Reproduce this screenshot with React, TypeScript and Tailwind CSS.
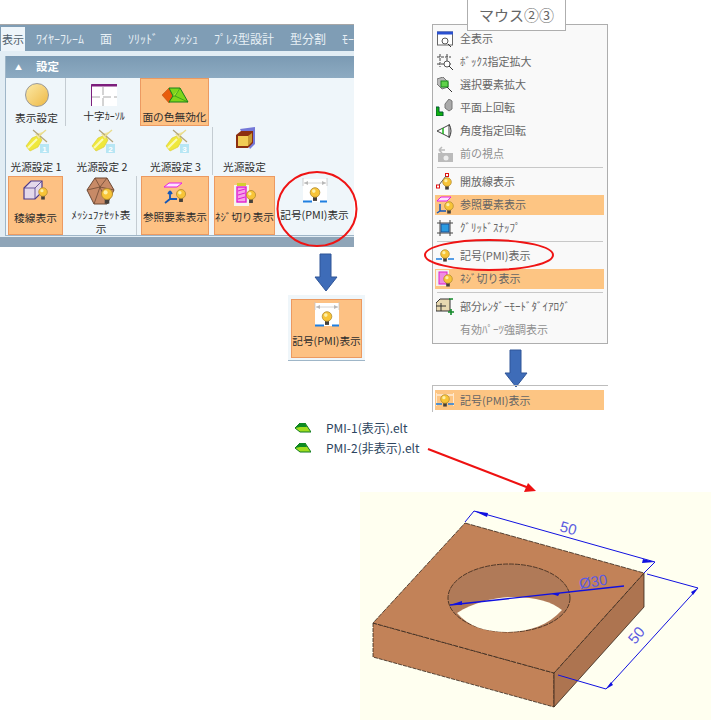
import type { ReactNode } from "react";

const jp = "font-['Noto_Sans_CJK_JP','Liberation_Sans',sans-serif]";

function Bulb({ x, y, s = 1 }: { x: number; y: number; s?: number }) {
  return (
    <g transform={`translate(${x} ${y}) scale(${s})`}>
      <rect x="-2" y="3.4" width="4" height="5" fill="#45403a" />
      <circle cx="0" cy="0" r="4.8" fill="#f8c437" stroke="#b08a30" strokeWidth="0.8" />
      <circle cx="-1.2" cy="-1.4" r="1.8" fill="#fdf0a8" />
    </g>
  );
}

function SourceIcon({ n }: { n: string }) {
  return (
    <svg className="ml-[2px] shrink-0" width="24" height="26" viewBox="0 0 24 26" aria-hidden>
      <path d="M1 19 L7 11 L14 8 L17 13 L13 20 L5 24 Z" fill="#efe83c" stroke="#d8c82c" strokeWidth="0.6" />
      <path d="M3 21 L12 12" stroke="#fbfab4" strokeWidth="2.2" />
      <path d="M10 7 L18 5 L14 12 Z" fill="#f0e6a0" />
      <path d="M8 3 L22 15" stroke="#b3a47a" strokeWidth="1.2" />
      <path d="M21 3 L14 9" stroke="#e8dc8c" strokeWidth="1.4" />
      <rect x="15" y="17" width="9" height="9" fill="#b7e6f4" />
      <text x="19.5" y="24.6" textAnchor="middle" fontSize="8" fontWeight="bold" fill="#fff" fontFamily="Liberation Sans">
        {n}
      </text>
    </svg>
  );
}

function PmiIcon() {
  return (
    <svg width="26" height="27" viewBox="0 0 26 27" aria-hidden>
      <rect x="1" y="2" width="24" height="23" fill="#ffffff" />
      <path d="M1 1 V9 M25 1 V9" stroke="#c4c4c4" strokeWidth="0.8" />
      <path d="M2 6 H24" stroke="#c9c9c9" strokeWidth="0.8" />
      <path d="M2 6 L6 4 V8 Z M24 6 L20 4 V8 Z" fill="#b8b8b8" />
      <path d="M1 24.5 H25" stroke="#1f7fe0" strokeWidth="2" strokeDasharray="9 8" />
      <Bulb x={13} y={15.5} />
    </svg>
  );
}

function RibbonButton({ label, className, children }: { label: ReactNode; className: string; children: ReactNode }) {
  return (
    <div className={`flex shrink-0 flex-col items-center text-center leading-[17px] ${className}`}>
      {children}
      <span className="block">{label}</span>
    </div>
  );
}

const orange = "border border-[#ec9a61] bg-[#fdc183]";

function Ribbon() {
  return (
    <div className={`flex h-[223px] w-[354px] flex-col bg-[#e2edf4] text-[10.7px] text-[#2d2d2d] ${jp}`}>
      <div className="h-px bg-[#a7a7a7]" />
      <div className="flex h-[26px] shrink-0 items-end bg-[#7f9db5] text-[#e8f0f5]">
        <div className="ml-px flex h-6 w-8 items-center justify-center bg-[#eef5fa] text-[11px] text-[#50606c]">表示</div>
        <div className="ml-[11px] flex h-6 items-center gap-[16px] whitespace-nowrap text-[12px]">
          <span>ﾜｲﾔｰﾌﾚｰﾑ</span>
          <span>面</span>
          <span>ｿﾘｯﾄﾞ</span>
          <span>ﾒｯｼｭ</span>
          <span>ﾌﾟﾚｽ型設計</span>
          <span>型分割</span>
          <span>ﾓｰ</span>
        </div>
      </div>
      <div className="flex flex-1 flex-col pl-[5px] pt-[5px]">
        <div className="flex flex-1 flex-col border-b border-l border-[#9fb6c8] bg-[#eff6fa]">
          <div className="flex h-[22px] shrink-0 items-center bg-gradient-to-b from-[#7b9ab3] to-[#8dabc2] pl-[9px] text-[11.5px] font-bold text-white">
            <span className="mr-[14px] text-[7px]">▲</span>設定
          </div>
          <div className="flex h-[48px] items-stretch">
            <RibbonButton label="表示設定" className="ml-[2px] w-[58px] border-r border-[#c4ccd2] pt-[5px]">
              <div className="mb-[2px] h-6 w-6 rounded-full border border-[#9a9a9a] bg-gradient-to-br from-[#fbe9a4] to-[#eeb93f]" />
            </RibbonButton>
            <RibbonButton label={<>十字<span className="text-[10px]">ｶｰｿﾙ</span></>} className="ml-[2px] w-[72px] pt-[6px]">
              <svg width="26" height="23" viewBox="0 0 26 23" aria-hidden>
                <rect x="0" y="0" width="26" height="22" fill="#fff" />
                <path d="M0.5 22 V0.5 H26" stroke="#7d1f7d" strokeWidth="1" fill="none" />
                <path d="M0 1.5 H26" stroke="#7d1f7d" strokeWidth="2" />
                <path d="M12 3 V22 M1 13 H26" stroke="#a8a8a8" strokeWidth="1" strokeDasharray="8 3" />
              </svg>
            </RibbonButton>
            <RibbonButton label="面の色無効化" className={`w-[69px] pt-[8px] ${orange}`}>
              <svg className="mb-[3px]" width="28" height="18" viewBox="0 0 28 18" aria-hidden>
                <path d="M1 8 L8 1 L12 9 L8 16 Z" fill="#e85c0c" stroke="#b34a10" strokeWidth="0.5" />
                <path d="M8 1 H19 L27 15 H8 L12 9 Z" fill="#7fd51a" stroke="#16801a" strokeWidth="1" />
                <path d="M19 1 L14 9 H12 M14 9 L27 15" stroke="#16801a" strokeWidth="0.6" fill="#b4ea3e" />
              </svg>
            </RibbonButton>
          </div>
          <div className="flex h-[49px] items-stretch pt-px">
            <RibbonButton label="光源設定 1" className="w-[60px]">
              <SourceIcon n="1" />
              <div className="h-[5px]" />
            </RibbonButton>
            <RibbonButton label="光源設定 2" className="ml-[6px] w-[60px]">
              <SourceIcon n="2" />
              <div className="h-[5px]" />
            </RibbonButton>
            <RibbonButton label="光源設定 3" className="ml-[10px] w-[67px]">
              <SourceIcon n="3" />
              <div className="h-[5px]" />
            </RibbonButton>
            <RibbonButton label="光源設定" className="ml-[3px] w-[64px] border-l border-[#c4ccd2]">
              <svg width="24" height="25" className="mb-[6px] shrink-0" viewBox="0 0 24 25" aria-hidden>
                <path d="M7 2 L22 0 V17 L17 22 Z" fill="#7478d8" />
                <path d="M3 8 L8 4 H20 V16 L15 21 H3 Z" fill="#8c2f10" />
                <rect x="5" y="9" width="10" height="10" fill="#f1cc55" />
                <path d="M15 9 L19 6 V15 L15 19 Z" fill="#c89a32" />
              </svg>
            </RibbonButton>
          </div>
          <div className="flex h-[60px] items-stretch pt-px">
            <RibbonButton label="稜線表示" className={`ml-[2px] w-[55px] pt-[3px] ${orange}`}>
              <svg className="mb-[4px] shrink-0" width="26" height="25" viewBox="0 0 26 25" aria-hidden>
                <path d="M1 8 L8 1 H19 V12 L12 19 H1 Z" fill="#e4d8ea" stroke="#4d3a8a" strokeWidth="1.2" />
                <path d="M1 8 H12 V19 M12 8 L19 1" fill="none" stroke="#4d3a8a" strokeWidth="0.8" />
                <Bulb x={20} y={12} s={0.9} />
              </svg>
            </RibbonButton>
            <RibbonButton
              label={<span className="block leading-[14px]">ﾒｯｼｭﾌｧｾｯﾄ表<br />示</span>}
              className="ml-[3px] w-[71px] border-r border-[#c4ccd2] pt-[1px]"
            >
              <svg className="mb-[2px] shrink-0" width="30" height="29" viewBox="0 0 30 29" aria-hidden>
                <path d="M9 1 H21 L28 13 L21 27 H8 L1 13 Z" fill="#c78a67" stroke="#6e4a35" strokeWidth="1" />
                <path d="M9 1 L14 10 L1 13 M14 10 L21 1 M14 10 L28 13 M14 10 L8 27 M14 10 L21 27" stroke="#6e4a35" strokeWidth="0.8" fill="none" />
                <Bulb x={21} y={17} s={1.15} />
              </svg>
            </RibbonButton>
            <RibbonButton label="参照要素表示" className={`ml-[4px] w-[68px] pt-[5px] ${orange}`}>
              <svg className="mb-[4px] shrink-0" width="24" height="22" viewBox="0 0 24 22" aria-hidden>
                <path d="M1 5 L6 1 H19 L14 5 Z" fill="#fde4ff" stroke="#e61ee6" strokeWidth="1" />
                <path d="M7 9 V17 H14 M7 17 L2 21 M7 9 L5 12 M7 9 L9 12" stroke="#1558b8" strokeWidth="1.8" fill="none" />
                <Bulb x={18} y={12} s={0.95} />
              </svg>
            </RibbonButton>
            <RibbonButton label="ﾈｼﾞ切り表示" className={`ml-[5px] w-[61px] whitespace-nowrap pt-[5px] ${orange}`}>
              <svg className="mb-[1px] shrink-0" width="24" height="25" viewBox="0 0 24 25" aria-hidden>
                <rect x="1" y="3" width="15" height="21" fill="#f6f5ee" />
                <rect x="4" y="1" width="9" height="3" fill="#d4d030" />
                <rect x="4" y="5" width="9" height="15" fill="#f6a0e8" stroke="#e01ecf" strokeWidth="1.4" />
                <path d="M5 9 L12 7 M5 13 L12 11 M5 17 L12 15" stroke="#e01ecf" />
                <Bulb x={18} y={13} s={0.95} />
              </svg>
            </RibbonButton>
            <RibbonButton label="記号(PMI)表示" className="ml-[2px] w-[75px] whitespace-nowrap pt-[1px]">
              <div className="mb-[2px] h-[27px]"><PmiIcon /></div>
            </RibbonButton>
          </div>
        </div>
        <div className="-ml-[5px] mt-px h-[10px] bg-[#8fa5b8]" />
      </div>
    </div>
  );
}

function DownArrow() {
  return (
    <svg width="24" height="40" viewBox="0 0 24 40" aria-hidden>
      <path d="M6 1 H17 V24 H23 L12 38 L1 24 H6 Z" fill="#3e6cb8" stroke="#2f5597" strokeWidth="1" />
    </svg>
  );
}

type Item = { label: string; icon: ReactNode; on?: boolean; off?: boolean };

const items: (Item | "sep")[] = [
  { label: "全表示", icon: <svg width="16" height="16" viewBox="0 0 16 16"><rect x="0.5" y="1" width="15" height="13" fill="#fff" stroke="#666" /><rect x="0" y="0.5" width="16" height="3" fill="#2a50d0" /><circle cx="8" cy="10" r="3" fill="none" stroke="#555" /><path d="M11 13 L14 16" stroke="#333" /></svg> },
  { label: "ﾎﾞｯｸｽ指定拡大", icon: <svg width="16" height="16" viewBox="0 0 16 16"><path d="M0 3 H14 M0 10 H14 M3 0 V13 M10 0 V13" stroke="#444" strokeDasharray="3 1" /><circle cx="10" cy="10" r="3" fill="#fff" stroke="#555" /><path d="M12 12 L16 16" stroke="#333" /></svg> },
  { label: "選択要素拡大", icon: <svg width="16" height="16" viewBox="0 0 16 16"><path d="M0 2 L6 0 L11 5 V10 L5 12 L0 7 Z" fill="#bbb" stroke="#777" /><rect x="4" y="4" width="7" height="6" fill="#5fd24a" stroke="#198a1c" /><path d="M10 10 L15 15" stroke="#333" /></svg> },
  { label: "平面上回転", icon: <svg width="17" height="17" viewBox="0 0 17 17"><path d="M0 8 H3 V13 H7 V17 H0 Z" fill="#10b010" stroke="#053" /><path d="M9 5 L13 0 L16 2 V10 L13 12 L9 9 Z" fill="#aaa" stroke="#777" /></svg> },
  { label: "角度指定回転", icon: <svg width="16" height="16" viewBox="0 0 16 16"><path d="M0 8 L12 2 V14 Z" fill="#fff" stroke="#444" /><path d="M6 5 V11" stroke="#1ab01a" strokeWidth="1.5" /><path d="M12 1 Q16 8 12 15" fill="none" stroke="#333" /></svg> },
  { label: "前の視点", off: true, icon: <svg width="16" height="16" viewBox="0 0 16 16"><rect x="1" y="7" width="15" height="9" fill="#bbb" /><circle cx="9" cy="12" r="2.5" fill="#eee" /><path d="M2 4 H8 M2 4 L5 1 M2 4 L5 7" stroke="#bbb" strokeWidth="1.5" fill="none" /></svg> },
  "sep",
  { label: "開放線表示", icon: <svg width="17" height="17" viewBox="0 0 17 17"><rect x="0.5" y="12" width="3" height="3" fill="#fff" stroke="#e01010" /><rect x="9.5" y="0.5" width="3" height="3" fill="#fff" stroke="#e01010" /><path d="M3 12 L10 3" stroke="#555" /><Bulb x={11} y={9} s={0.9} /></svg> },
  { label: "参照要素表示", on: true, icon: <svg width="18" height="18" viewBox="0 0 18 18"><path d="M1 5 L5 1 H15 L11 5 Z" fill="#fde4ff" stroke="#e61ee6" /><path d="M4 8 V15 H10 M4 15 L1 17" stroke="#1558b8" strokeWidth="1.5" fill="none" /><Bulb x={13} y={10} s={0.9} /></svg> },
  { label: "ｸﾞﾘｯﾄﾞｽﾅｯﾌﾟ", icon: <svg width="16" height="16" viewBox="0 0 16 16"><path d="M3 0 V16 M13 0 V16 M0 3 H16 M0 13 H16" stroke="#444" /><rect x="4" y="4" width="8" height="8" fill="#2a9ae0" stroke="#1a4f90" /></svg> },
  "sep",
  { label: "記号(PMI)表示", icon: <svg width="18" height="16" viewBox="0 0 18 16"><path d="M0 11 H18" stroke="#1f7fe0" strokeWidth="1.5" strokeDasharray="6 6" /><Bulb x={9} y={6} s={0.9} /></svg> },
  { label: "ﾈｼﾞ切り表示", on: true, icon: <svg width="17" height="17" viewBox="0 0 17 17"><rect x="0" y="0" width="13" height="16" fill="#f4f2e8" /><rect x="3" y="2" width="8" height="12" fill="#f08ce0" stroke="#e01ecf" /><Bulb x={12} y={9} s={0.9} /></svg> },
  "sep",
  { label: "部分ﾚﾝﾀﾞｰﾓｰﾄﾞﾀﾞｲｱﾛｸﾞ", icon: <svg width="18" height="17" viewBox="0 0 18 17"><path d="M0 5 L4 1 H14 V13 H0 Z" fill="#e8d8b0" stroke="#333" /><path d="M0 8 H10 M5 5 V13" stroke="#333" /><path d="M13 1 H17 M12 14 H18 M15 11 V17" stroke="#138a2a" strokeWidth="1.6" /></svg> },
  { label: "有効ﾊﾟｰﾂ強調表示", off: true, icon: null },
];

function MenuRow({ label, icon, on, off }: Item) {
  return (
    <div className={`flex h-[23px] items-center pl-[2px] ${off ? "text-[#909090]" : "text-[#666]"}`}>
      <div className={`flex h-5 w-[169px] items-center ${on ? "bg-[#fdc583]" : ""}`}>
        <div className="flex w-[19px] shrink-0 justify-center">{icon}</div>
        <span className="ml-[6px] whitespace-nowrap">{label}</span>
      </div>
    </div>
  );
}

function ContextMenu() {
  return (
    <div className={`flex h-[320px] w-[176px] flex-col border border-[#aeaeae] bg-[#f9f9f9] pt-[2px] text-[11px] ${jp}`}>
      {items.map((it, i) =>
        it === "sep" ? (
          <div key={i} className="mx-[4px] my-[2px] h-px shrink-0 bg-[#c8c8c8]" />
        ) : (
          <MenuRow key={i} {...it} />
        ),
      )}
    </div>
  );
}

function PartIcon() {
  return (
    <svg width="16" height="10" viewBox="0 0 16 10" aria-hidden>
      <path d="M0 5 L5 0 H10 L16 9 H5 Z" fill="#a0dc20" stroke="#0e7a20" strokeWidth="1" />
      <path d="M0 5 L5 0 H10 L12 4 H5 Z" fill="#0e8a24" />
    </svg>
  );
}

function Model() {
  return (
    <svg className="block h-full w-full" viewBox="360 492 351 228" aria-hidden>
      <rect x="360" y="492" width="351" height="228" fill="#fffff0" />
      <path d="M373 623 V657 L554 707 V673 Z" fill="#c28258" stroke="#33251a" strokeWidth="0.8" strokeDasharray="4 1" />
      <path d="M554 673 V707 L644 607 V573 Z" fill="#ad7450" stroke="#33251a" strokeWidth="0.8" />
      <path d="M465 523 L644 573 L554 673 L373 623 Z" fill="#c28258" stroke="#33251a" strokeWidth="0.8" strokeDasharray="5 1" />
      <ellipse cx="509" cy="598" rx="61" ry="34" fill="#b07a58" stroke="#33251a" strokeWidth="0.8" strokeDasharray="5 1" />
      <path d="M457 613 C475 602 495 597 515 597 C535 597 552 602 562 610 C548 625 530 632 507 632 C485 632 468 626 457 613 Z" fill="#fffff0" />
      <g stroke="#1010e0" strokeWidth="1" fill="none">
        <path d="M465 522 L474 511 L655 562 L644 573" />
        <path d="M647 574 L698 588 L606 689 L558 675" />
        <path d="M450 605 L624 586" strokeWidth="1.4" />
      </g>
      <g fill="#1010e0">
        <path d="M474 511 L488 513 L487 517 Z" />
        <path d="M655 562 L643 559 L642 563 Z" />
        <path d="M450 605 L462 601 L462 605 Z" />
        <path d="M560 593 L558 596 L552 594 Z" />
        <path d="M698 588 L691 592 L693 595 Z" />
        <path d="M606 689 L611 682 L613 685 Z" />
      </g>
      <g fill="#5b5be0" fontFamily="Liberation Sans" fontSize="15">
        <text transform="translate(559 531) rotate(15)">50</text>
        <text transform="translate(635 645) rotate(-50)">50</text>
        <text transform="translate(580 589) rotate(-9)">Ø30</text>
      </g>
    </svg>
  );
}

export default function App() {
  return (
    <div className="relative h-[720px] w-[711px] overflow-hidden bg-white">
      <div className="absolute left-0 top-[24px]"><Ribbon /></div>

      <svg className="pointer-events-none absolute left-[272px] top-[168px]" width="90" height="84" viewBox="0 0 90 84" aria-hidden>
        <ellipse cx="45" cy="41" rx="39.5" ry="37" fill="none" stroke="#ef1414" strokeWidth="2" />
      </svg>

      <div className="absolute left-[314px] top-[253px]"><DownArrow /></div>

      <div className={`absolute left-[288px] top-[295px] h-[66px] w-[77px] border-b border-[#9fb6c8] bg-[#eff6fa] px-[3px] pt-[4px] text-[10.7px] text-[#2d2d2d] ${jp}`}>
        <RibbonButton label="記号(PMI)表示" className={`h-[59px] w-[71px] whitespace-nowrap pt-[1px] ${orange}`}>
          <div className="mb-[4px] h-[27px]"><PmiIcon /></div>
        </RibbonButton>
      </div>

      <div className="absolute left-[432px] top-[24px]"><ContextMenu /></div>
      <div className={`absolute left-[467px] top-0 flex h-[31px] w-[99px] items-center justify-center border border-t-0 border-[#aeaeae] bg-white text-[15px] text-[#666] ${jp}`}>
        マウス②③
      </div>

      <svg className="pointer-events-none absolute left-[420px] top-[238px]" width="146" height="34" viewBox="0 0 146 34" aria-hidden>
        <ellipse cx="69" cy="17" rx="64" ry="15" fill="none" stroke="#ef1414" strokeWidth="2" />
      </svg>

      <div className="absolute left-[504px] top-[349px]"><DownArrow /></div>

      <div className={`absolute left-[432px] top-[385px] h-[27px] w-[176px] border-l border-t border-[#bdbdbd] pl-[2px] pt-[4px] text-[11px] text-[#666] ${jp}`}>
        <div className="flex h-5 w-[169px] items-center bg-[#fdc583]">
          <div className="flex w-[19px] justify-center">
            <svg width="18" height="16" viewBox="0 0 18 16" aria-hidden>
              <path d="M0 1 V14 M18 1 V14 M1 3 H17" stroke="#fff" strokeWidth="1.2" />
              <path d="M0 12 H18" stroke="#1f7fe0" strokeWidth="1.5" strokeDasharray="6 6" />
              <Bulb x={9} y={7} s={0.9} />
            </svg>
          </div>
          <span className="ml-[6px]">記号(PMI)表示</span>
        </div>
      </div>

      <div className={`absolute left-[295px] top-[418px] flex flex-col text-[12px] leading-[20px] text-[#2c4560] ${jp}`}>
        <div className="flex items-center"><PartIcon /><span className="ml-[15px]">PMI-1(表示).elt</span></div>
        <div className="flex items-center"><PartIcon /><span className="ml-[15px]">PMI-2(非表示).elt</span></div>
      </div>

      <div className="absolute left-[360px] top-[492px] h-[228px] w-[351px]"><Model /></div>

      <svg className="pointer-events-none absolute left-[425px] top-[445px]" width="115" height="50" viewBox="0 0 115 50" aria-hidden>
        <path d="M3 4 L104 43" stroke="#ee1111" strokeWidth="2" />
        <path d="M111 46 L99 47 L103 38 Z" fill="#ee1111" />
      </svg>
    </div>
  );
}
